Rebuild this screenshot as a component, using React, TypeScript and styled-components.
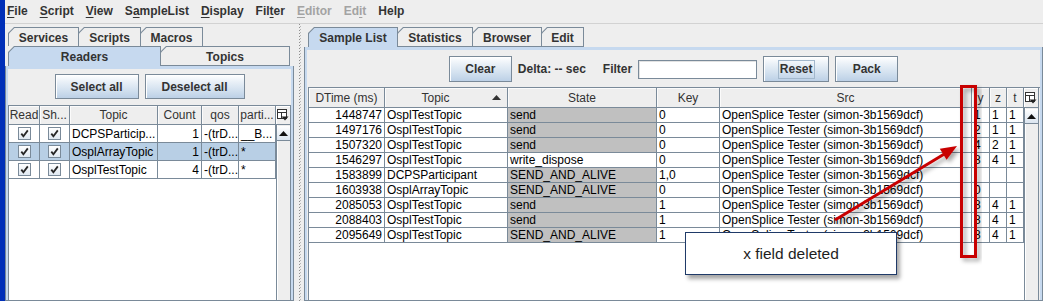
import React from 'react';
import styled, { createGlobalStyle, css } from 'styled-components';

const LINE = '#7a8a99';
const SKY = '#c6d9ef';

const GlobalStyle = createGlobalStyle`
  html, body { margin: 0; padding: 0; background: #eeeeee; }
  body { font-family: "Liberation Sans", Arial, sans-serif; font-size: 12px; color: #333; }
  * { box-sizing: border-box; }
`;

const Page = styled.div`
  position: relative;
  width: 1043px;
  height: 301px;
  overflow: hidden;
`;

const Frame = styled.div`
  width: 100%;
  height: 100%;
  display: flex;
  flex-direction: column;
  background: #eeeeee;
  border-left: 5px solid #0a3ccf;
  border-image: linear-gradient(to right, #002fb8, #0a44d8 60%, #4b7be3) 1;
`;

const MenuBar = styled.div`
  height: 24px;
  flex-shrink: 0;
  display: flex;
  align-items: center;
  gap: 12px;
  padding: 0 0 1px 2px;
  border-bottom: 1px solid #d2d2d2;
`;

const MenuItem = styled.span<{ $disabled?: boolean }>`
  font-weight: bold;
  font-size: 12px;
  color: ${({ $disabled }) => ($disabled ? '#a3a3a3' : '#333')};
  u {
    text-decoration: underline;
    text-underline-offset: 2px;
  }
`;

const Main = styled.div`
  flex: 1;
  display: flex;
  min-height: 0;
`;

const Pane = styled.div<{ $width?: number; $tabInset: number }>`
  display: flex;
  flex-direction: column;
  padding-top: 3px;
  ${({ $width }) =>
    $width
      ? css`
          width: ${$width}px;
          flex-shrink: 0;
        `
      : css`
          flex: 1;
        `}
  --tab-inset: ${({ $tabInset }) => $tabInset}px;
`;

const TabRow = styled.div<{ $h: number }>`
  display: flex;
  height: ${({ $h }) => $h}px;
  padding-left: var(--tab-inset);
  flex-shrink: 0;
`;

const TabShell = styled.div<{ $w: number; $front?: boolean; $selected?: boolean }>`
  width: ${({ $w }) => $w}px;
  height: 100%;
  margin-right: -1px;
  background: ${LINE};
  clip-path: polygon(6px 0, 100% 0, 100% 100%, 0 100%, 0 6px);
  padding: 1px 1px ${({ $front, $selected }) => ($front && !$selected ? '1px' : '0')} 1px;
`;

const TabFace = styled.div<{ $selected?: boolean }>`
  height: 100%;
  background: ${({ $selected }) => ($selected ? SKY : '#eeeeee')};
  clip-path: polygon(5.5px 0, 100% 0, 100% 100%, 0 100%, 0 5.5px);
  display: flex;
  align-items: center;
  justify-content: center;
  font-weight: bold;
  font-size: 12px;
  color: #333;
  padding-top: 1px;
`;

const TabContent = styled.div`
  flex: 1;
  min-height: 0;
  display: flex;
  flex-direction: column;
  border: 1px solid ${LINE};
  border-top: none;
  box-shadow: inset 2px 3px 0 ${SKY}, inset -2px 0 0 ${SKY};
  padding: 3px 2px 0 2px;
`;

const Splitter = styled.div`
  width: 10px;
  flex-shrink: 0;
  padding-left: 5px;
`;

const Grip = styled.div`
  width: 2px;
  height: 100%;
  background-image: repeating-linear-gradient(to bottom, #8f8f8f 0 1px, transparent 1px 3px),
    repeating-linear-gradient(to bottom, transparent 0 2px, #b5b5b5 2px 3px);
  background-size: 1px 100%, 1px 100%;
  background-position: 0 0, 1px 0;
  background-repeat: repeat-y;
`;

const ButtonRow = styled.div<{ $pt: number; $pb: number }>`
  display: flex;
  align-items: center;
  justify-content: center;
  gap: 6px;
  padding: ${({ $pt }) => $pt}px 0 ${({ $pb }) => $pb}px;
  flex-shrink: 0;
`;

const Button = styled.div<{ $w: number; $h: number }>`
  width: ${({ $w }) => $w}px;
  height: ${({ $h }) => $h}px;
  border: 1px solid ${LINE};
  background: linear-gradient(to bottom, #ffffff 0%, #e9f0f7 30%, #d3e1ef 65%, #bcd0e6 100%);
  box-shadow: inset 1px 1px 0 #ffffff;
  display: flex;
  align-items: center;
  justify-content: center;
  font-weight: bold;
  font-size: 12px;
  color: #333;
`;

const FocusRing = styled.span`
  border: 1px solid #a3b8cc;
  padding: 1px 1px 2px;
`;

const ToolLabel = styled.span<{ $pr?: number }>`
  font-weight: bold;
  font-size: 12px;
  color: #333;
  padding-right: ${({ $pr }) => $pr ?? 0}px;
`;

const TextField = styled.div`
  width: 119px;
  height: 19px;
  background: #fff;
  border: 1px solid ${LINE};
  box-shadow: inset 1px 1px 0 #e2e2e2;
`;

const TableBox = styled.div<{ $ml?: number }>`
  flex: 1;
  min-height: 0;
  display: flex;
  margin-left: ${({ $ml }) => $ml ?? 0}px;
  border-left: 1px solid ${LINE};
  border-top: 1px solid ${LINE};
`;

const TableMain = styled.div`
  display: flex;
  flex-direction: column;
  background: #fff;
`;

const GridRow = styled.div<{ $cols: string; $h: number; $selected?: boolean }>`
  display: grid;
  grid-template-columns: ${({ $cols }) => $cols};
  height: ${({ $h }) => $h}px;
  background: ${({ $selected }) => ($selected ? '#b8cfe5' : 'transparent')};
`;

const HeadCell = styled.div`
  display: flex;
  align-items: center;
  justify-content: center;
  background: #eeeeee;
  border-right: 1px solid ${LINE};
  border-bottom: 1px solid ${LINE};
  box-shadow: inset 1px 1px 0 #fbfbfb;
  font-size: 12px;
  color: #333;
  white-space: nowrap;
  overflow: hidden;
`;

const HeadLabel = styled.span`
  flex: 1;
  text-align: center;
`;

const SortMark = styled.svg`
  margin: 0 6px 1px 6px;
  flex-shrink: 0;
`;

const Cell = styled.div<{ $align?: 'left' | 'right' | 'center'; $shade?: boolean }>`
  display: flex;
  align-items: center;
  justify-content: ${({ $align }) =>
    $align === 'right' ? 'flex-end' : $align === 'center' ? 'center' : 'flex-start'};
  padding: 0 2px;
  border-right: 1px solid ${LINE};
  border-bottom: 1px solid ${LINE};
  background: ${({ $shade }) => ($shade ? '#c0c0c0' : 'transparent')};
  font-size: 12px;
  color: #000;
  white-space: nowrap;
  overflow: hidden;
  line-height: 1;
`;

const CheckBox = styled.span`
  width: 13px;
  height: 13px;
  border: 1px solid ${LINE};
  background: linear-gradient(to bottom, #ffffff, #dfe8f1);
  display: inline-flex;
  align-items: center;
  justify-content: center;
`;

const SideColumn = styled.div`
  width: 15px;
  flex-shrink: 0;
  display: flex;
  flex-direction: column;
`;

const Corner = styled.div<{ $h: number }>`
  height: ${({ $h }) => $h}px;
  flex-shrink: 0;
  display: flex;
  align-items: center;
  justify-content: center;
  background: #eeeeee;
  border-right: 1px solid ${LINE};
  border-bottom: 1px solid ${LINE};
  box-shadow: inset 1px 1px 0 #fff;
`;

const Track = styled.div`
  flex: 1;
  background: #eeeeee;
  border-left: 1px solid ${LINE};
  border-right: 1px solid ${LINE};
  box-shadow: inset 1px 0 0 #fff;
  padding-top: 1px;
`;

const ArrowButton = styled.div`
  height: 15px;
  display: flex;
  align-items: center;
  justify-content: center;
  border-bottom: 1px solid ${LINE};
  background: linear-gradient(to bottom, #ffffff, #dbe5f0);
`;

const Overlay = styled.svg`
  position: absolute;
  left: 0;
  top: 0;
  pointer-events: none;
`;

const Callout = styled.div`
  position: absolute;
  left: 685px;
  top: 232px;
  width: 212px;
  height: 43px;
  background: #fff;
  border: 1.5px solid #1f3a68;
  box-shadow: 3px 4px 4px rgba(0, 0, 0, 0.35);
  display: flex;
  align-items: center;
  justify-content: center;
  font-size: 15.5px;
  color: #1e1e1e;
  padding-top: 1px;
`;

const Check = () => (
  <svg width="9" height="9" viewBox="0 0 9 9">
    <path d="M1.3 4.6 L3.4 7.3 L7.8 1.4" stroke="#262626" strokeWidth="1.8" fill="none" />
  </svg>
);

const ColumnControl = () => (
  <svg width="12" height="12" viewBox="0 0 12 12">
    <rect x="0.5" y="0.5" width="9" height="9" fill="#fff" stroke="#333" />
    <line x1="0.5" y1="3.5" x2="9.5" y2="3.5" stroke="#333" />
    <line x1="4.5" y1="3.5" x2="4.5" y2="9.5" stroke="#333" />
    <path d="M4.5 7.5 H11.5 L8 11.5 Z" fill="#222" />
  </svg>
);

const UpArrow = () => (
  <svg width="9" height="5" viewBox="0 0 9 5">
    <path d="M0 5 L4.5 0 L9 5 Z" fill="#111" />
  </svg>
);

const ScrollSide = ({ head }: { head: number }) => (
  <SideColumn>
    <Corner $h={head}>
      <ColumnControl />
    </Corner>
    <Track>
      <ArrowButton>
        <UpArrow />
      </ArrowButton>
    </Track>
  </SideColumn>
);

const menus: { label: React.ReactNode; disabled?: boolean }[] = [
  { label: <><u>F</u>ile</> },
  { label: <><u>S</u>cript</> },
  { label: <><u>V</u>iew</> },
  { label: <>S<u>a</u>mpleList</> },
  { label: <><u>D</u>isplay</> },
  { label: <>Fil<u>t</u>er</> },
  { label: <><u>E</u>ditor</>, disabled: true },
  { label: <>Ed<u>i</u>t</>, disabled: true },
  { label: <>Help</> },
];

const LEFT_COLS = '31px 30px 88px 44px 37px 37px';
const leftHeads = ['Read', 'Sh...', 'Topic', 'Count', 'qos', 'parti...'];
const readers = [
  { topic: 'DCPSParticip...', count: '1', qos: '-(trD...', parti: '__B...' },
  { topic: 'OsplArrayTopic', count: '1', qos: '-(trD...', parti: '*', selected: true },
  { topic: 'OsplTestTopic', count: '4', qos: '-(trD...', parti: '*' },
];

const RIGHT_COLS = '76px 123px 149px 63px 252px 18px 17px 17px';
const SRC = 'OpenSplice Tester (simon-3b1569dcf)';
const samples = [
  ['1448747', 'OsplTestTopic', 'send', '0', '1', '1', '1'],
  ['1497176', 'OsplTestTopic', 'send', '0', '2', '1', '1'],
  ['1507320', 'OsplTestTopic', 'send', '0', '4', '2', '1'],
  ['1546297', 'OsplTestTopic', 'write_dispose', '0', '8', '4', '1'],
  ['1583899', 'DCPSParticipant', 'SEND_AND_ALIVE', '1,0', '', '', ''],
  ['1603938', 'OsplArrayTopic', 'SEND_AND_ALIVE', '0', '0', '', ''],
  ['2085053', 'OsplTestTopic', 'send', '1', '8', '4', '1'],
  ['2088403', 'OsplTestTopic', 'send', '1', '8', '4', '1'],
  ['2095649', 'OsplTestTopic', 'SEND_AND_ALIVE', '1', '8', '4', '1'],
];

export default function App() {
  return (
    <Page>
      <GlobalStyle />
      <Frame>
        <MenuBar>
          {menus.map((m, i) => (
            <MenuItem key={i} $disabled={m.disabled}>
              {m.label}
            </MenuItem>
          ))}
        </MenuBar>
        <Main>
          <Pane $width={289} $tabInset={3}>
            <TabRow $h={19}>
              <TabShell $w={71}><TabFace>Services</TabFace></TabShell>
              <TabShell $w={63}><TabFace>Scripts</TabFace></TabShell>
              <TabShell $w={63}><TabFace>Macros</TabFace></TabShell>
            </TabRow>
            <TabRow $h={20}>
              <TabShell $w={153} $front $selected><TabFace $selected>Readers</TabFace></TabShell>
              <TabShell $w={130} $front><TabFace>Topics</TabFace></TabShell>
            </TabRow>
            <TabContent>
              <ButtonRow $pt={5} $pb={6}>
                <Button $w={84} $h={25}>Select all</Button>
                <Button $w={100} $h={25}>Deselect all</Button>
              </ButtonRow>
              <TableBox>
                <TableMain>
                  <GridRow $cols={LEFT_COLS} $h={19}>
                    {leftHeads.map((h) => (
                      <HeadCell key={h}>{h}</HeadCell>
                    ))}
                  </GridRow>
                  {readers.map((r) => (
                    <GridRow key={r.topic} $cols={LEFT_COLS} $h={18} $selected={r.selected}>
                      <Cell $align="center"><CheckBox><Check /></CheckBox></Cell>
                      <Cell $align="center"><CheckBox><Check /></CheckBox></Cell>
                      <Cell>{r.topic}</Cell>
                      <Cell $align="right">{r.count}</Cell>
                      <Cell>{r.qos}</Cell>
                      <Cell>{r.parti}</Cell>
                    </GridRow>
                  ))}
                </TableMain>
                <ScrollSide head={19} />
              </TableBox>
            </TabContent>
          </Pane>

          <Splitter>
            <Grip />
          </Splitter>

          <Pane $tabInset={4}>
            <TabRow $h={20}>
              <TabShell $w={90} $front $selected><TabFace $selected>Sample List</TabFace></TabShell>
              <TabShell $w={76} $front><TabFace>Statistics</TabFace></TabShell>
              <TabShell $w={70} $front><TabFace>Browser</TabFace></TabShell>
              <TabShell $w={43} $front><TabFace>Edit</TabFace></TabShell>
            </TabRow>
            <TabContent>
              <ButtonRow $pt={6} $pb={5}>
                <Button $w={63} $h={26}>Clear</Button>
                <ToolLabel $pr={11}>Delta: -- sec</ToolLabel>
                <ToolLabel>Filter</ToolLabel>
                <TextField />
                <Button $w={66} $h={26}><FocusRing>Reset</FocusRing></Button>
                <Button $w={63} $h={26}>Pack</Button>
              </ButtonRow>
              <TableBox $ml={1}>
                <TableMain>
                  <GridRow $cols={RIGHT_COLS} $h={20}>
                    <HeadCell>DTime (ms)</HeadCell>
                    <HeadCell>
                      <HeadLabel>Topic</HeadLabel>
                      <SortMark width="9" height="5" viewBox="0 0 9 5">
                        <path d="M0 5 L4.5 0 L9 5 Z" fill="#333" />
                      </SortMark>
                    </HeadCell>
                    <HeadCell>State</HeadCell>
                    <HeadCell>Key</HeadCell>
                    <HeadCell>Src</HeadCell>
                    <HeadCell>y</HeadCell>
                    <HeadCell>z</HeadCell>
                    <HeadCell>t</HeadCell>
                  </GridRow>
                  {samples.map((s) => (
                    <GridRow key={s[0]} $cols={RIGHT_COLS} $h={15}>
                      <Cell $align="right">{s[0]}</Cell>
                      <Cell>{s[1]}</Cell>
                      <Cell $shade={s[2] !== 'write_dispose'}>{s[2]}</Cell>
                      <Cell>{s[3]}</Cell>
                      <Cell>{SRC}</Cell>
                      <Cell>{s[4]}</Cell>
                      <Cell>{s[5]}</Cell>
                      <Cell>{s[6]}</Cell>
                    </GridRow>
                  ))}
                </TableMain>
                <ScrollSide head={20} />
              </TableBox>
            </TabContent>
          </Pane>
        </Main>
      </Frame>

      <Overlay width="1043" height="301" viewBox="0 0 1043 301">
        <defs>
          <filter id="soft" x="-30%" y="-30%" width="170%" height="170%">
            <feDropShadow dx="3" dy="3" stdDeviation="2" floodColor="#000" floodOpacity="0.35" />
          </filter>
        </defs>
        <g filter="url(#soft)">
          <line x1="835" y1="220" x2="946" y2="153" stroke="#c80000" strokeWidth="3" />
          <polygon points="957,146 946.6,159.8 939.8,148.8" fill="#c80000" />
        </g>
        <rect
          x="961.5"
          y="86.5"
          width="14"
          height="170"
          fill="none"
          stroke="#c80000"
          strokeWidth="3"
          filter="url(#soft)"
        />
      </Overlay>
      <Callout>x field deleted</Callout>
    </Page>
  );
}
